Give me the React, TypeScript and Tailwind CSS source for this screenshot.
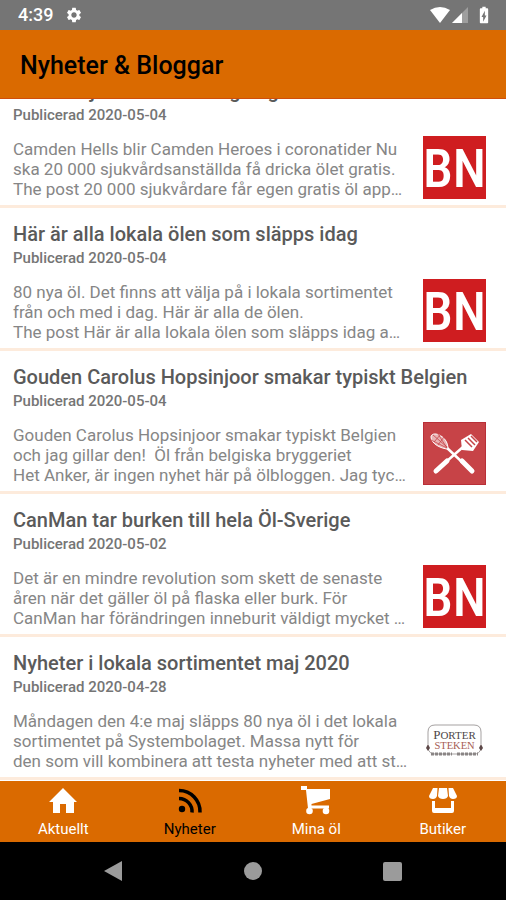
import React from 'react';
import clsx from 'clsx';
import { MdBatteryChargingFull, MdSettings } from 'react-icons/md';

type Logo = 'bn' | 'grill' | 'porter';

interface Post {
  title: string;
  date: string;
  lines: string[];
  logo: Logo;
}

const posts: Post[] = [
  {
    title: '20 000 sjukvårdare får egen gratis öl',
    date: '2020-05-04',
    lines: [
      'Camden Hells blir Camden Heroes i coronatider Nu',
      'ska 20 000 sjukvårdsanställda få dricka ölet gratis.',
      'The post 20 000 sjukvårdare får egen gratis öl app…',
    ],
    logo: 'bn',
  },
  {
    title: 'Här är alla lokala ölen som släpps idag',
    date: '2020-05-04',
    lines: [
      '80 nya öl. Det finns att välja på i lokala sortimentet',
      'från och med i dag. Här är alla de ölen.',
      'The post Här är alla lokala ölen som släpps idag a…',
    ],
    logo: 'bn',
  },
  {
    title: 'Gouden Carolus Hopsinjoor smakar typiskt Belgien',
    date: '2020-05-04',
    lines: [
      'Gouden Carolus Hopsinjoor smakar typiskt Belgien',
      'och jag gillar den!  Öl från belgiska bryggeriet',
      'Het Anker, är ingen nyhet här på ölbloggen. Jag tyc…',
    ],
    logo: 'grill',
  },
  {
    title: 'CanMan tar burken till hela Öl-Sverige',
    date: '2020-05-02',
    lines: [
      'Det är en mindre revolution som skett de senaste',
      'åren när det gäller öl på flaska eller burk. För',
      'CanMan har förändringen inneburit väldigt mycket …',
    ],
    logo: 'bn',
  },
  {
    title: 'Nyheter i lokala sortimentet maj 2020',
    date: '2020-04-28',
    lines: [
      'Måndagen den 4:e maj släpps 80 nya öl i det lokala',
      'sortimentet på Systembolaget. Massa nytt för',
      'den som vill kombinera att testa nyheter med att st…',
    ],
    logo: 'porter',
  },
];

function BnLogo() {
  return (
    <svg viewBox="0 0 63 63" className="size-[63px]" role="img" aria-label="BN">
      <rect width="63" height="63" fill="#cf1d20" />
      <text
        x="31.500"
        y="51"
        textAnchor="middle"
        fill="#fff"
        fontFamily="'Roboto Condensed', Roboto, sans-serif"
        fontWeight="500"
        fontSize="54"
      >
        BN
      </text>
    </svg>
  );
}

function GrillLogo() {
  return (
    <svg viewBox="0 0 63 63" className="size-[63px]" aria-hidden="true">
      <rect width="63" height="63" fill="#b92f38" />
      <rect x="1" y="1" width="61" height="61" fill="#c74347" />
      <g stroke="#fff" strokeLinecap="round" fill="none">
        <path d="M23 25 39 40M40 25 24 39" strokeWidth="2.5" />
        <path d="M39 39 49 49M24 39 13 49" strokeWidth="5" />
      </g>
      <path d="M8 15c0-3 4-4 8-2 5 2 9 7 9 14-6 0-17-5-17-12Z" fill="#e9b3b4" stroke="#fff" />
      <path d="m10 13 14 12M8 18l16 8M15 12l9 14M11 20l7-8M15 23l6-8" stroke="#c74347" strokeWidth=".8" />
      <path d="M38 18 48 12 56 20 50 29 39 28Z" fill="#fff" />
      <path d="m42 18 7 7M45 16l7 7M48 14l6 6" stroke="#c74347" strokeWidth="1.5" />
    </svg>
  );
}

function PorterLogo() {
  return (
    <svg viewBox="0 0 63 63" className="size-[63px]" role="img" aria-label="Porter Steken">
      <path
        d="M5 36V24q0-7 7-7h39q7 0 7 7v12M5 40q1 6 7 6h39q6 0 7-6"
        fill="none"
        stroke="#a5a1a1"
        strokeWidth="1"
      />
      <path d="M8 46h21M34 46h21" stroke="#8a8585" strokeWidth="3" strokeDasharray="3 1" />
      <path d="m3 40 2-4 2 4-2 3ZM56 40l2-4 2 4-2 3Z" fill="#5d4848" />
      <g fontFamily="'Liberation Serif', serif" textAnchor="middle">
        <text x="31.500" y="31" fill="#4d4747" fontSize="13">P<tspan fontSize="11">ORTER</tspan></text>
        <text x="31.500" y="41" fill="#a65c53" fontSize="10.500">STEKEN</text>
      </g>
    </svg>
  );
}

const logos: Record<Logo, React.ReactNode> = {
  bn: <BnLogo />,
  grill: <GrillLogo />,
  porter: <PorterLogo />,
};

const tabs = [
  {
    label: 'Aktuellt',
    icon: <path fill="currentColor" d="M14 1 28 15h-3v11h-8v-9h-6v9H4V15H0Z" />,
  },
  {
    label: 'Nyheter',
    active: true,
    icon: (
      <g fill="none" stroke="currentColor" strokeWidth="3.5">
        <circle cx="6" cy="22" r="3.2" fill="currentColor" stroke="none" />
        <path d="M3 11.500a13 13 0 0 1 13 14M3 3.500a21 21 0 0 1 21 22" />
      </g>
    ),
  },
  {
    label: 'Mina öl',
    icon: (
      <g fill="currentColor">
        <path d="M-1-1h6v3h23v10L9.500 17v1.500H27v3H6L4 3h-5Z" />
        <circle cx="7.500" cy="24" r="3.300" />
        <circle cx="24" cy="24" r="3.300" />
      </g>
    ),
  },
  {
    label: 'Butiker',
    icon: (
      <g fill="currentColor">
        <path d="M4 1h4.500L8 9q-1 3-4 3-4 0-4-3ZM10 1h8l1 8q-1 3-5 3t-5-3ZM19.500 1H24l4 8q0 3-4 3-3 0-4-3Z" />
        <path d="M3 14h3v7h16v-7h3v10q0 2-2 2H5q-2 0-2-2Z" />
      </g>
    ),
  },
];

function PostRow({ post }: { post: Post }) {
  return (
    <li className="border-b-3 border-[#fdebdc] pt-3 pr-5 pb-1.5 pl-[13px]">
      <h2 className="text-xl leading-7 font-medium whitespace-nowrap text-[#5a5a5a]">{post.title}</h2>
      <p className="text-[15px] leading-5 font-medium text-[#757575]">Publicerad {post.date}</p>
      <div className="flex items-start justify-between pt-[11px]">
        <p className="pt-[3px] text-[17px] leading-5 text-[#868686]">
          {post.lines.map((line) => (
            <span key={line} className="block whitespace-pre">
              {line}
            </span>
          ))}
        </p>
        <div className="shrink-0">{logos[post.logo]}</div>
      </div>
    </li>
  );
}

export default function App() {
  return (
    <div className="flex h-screen flex-col bg-white font-[Roboto,sans-serif]">
      <div className="flex h-[30px] shrink-0 items-center justify-between bg-[#757575] pr-3 pl-[18px] text-white">
        <div className="flex items-center gap-3">
          <span className="text-lg font-medium">4:39</span>
          <MdSettings className="size-[18px]" />
        </div>
        <div className="flex items-center">
          <svg viewBox="0 0 20 16" className="mr-0.5 h-4 w-5" fill="currentColor" aria-hidden="true">
            <path d="M0 3Q10-3 20 3L10 16Z" />
          </svg>
          <svg viewBox="0 0 16 16" className="mr-1.5 size-4" fill="currentColor" aria-hidden="true">
            <path d="M0 16 16 0v16Z" opacity=".3" />
            <path d="M0 16 10 6v10Z" />
          </svg>
          <MdBatteryChargingFull className="size-5" />
        </div>
      </div>

      <header className="flex h-[69px] shrink-0 items-center border-b border-[#d04e0c] bg-[#da6a00] px-5 pt-1">
        <h1 className="text-[25px] leading-8 font-medium text-black">Nyheter &amp; Bloggar</h1>
      </header>

      <main className="flex min-h-0 flex-1 flex-col justify-end overflow-hidden pb-px">
        <ul>
          {posts.map((post) => (
            <PostRow key={post.title} post={post} />
          ))}
        </ul>
      </main>

      <nav className="grid h-[61px] shrink-0 grid-cols-4 bg-[#da6a00]">
        {tabs.map((tab) => (
          <button
            key={tab.label}
            type="button"
            className={clsx(
              'flex flex-col items-center gap-1 pt-1.5 text-[15px] leading-5',
              tab.active ? 'text-black' : 'text-white',
            )}
          >
            <svg viewBox="0 0 28 28" className="size-7 overflow-visible" aria-hidden="true">
              {tab.icon}
            </svg>
            {tab.label}
          </button>
        ))}
      </nav>

      <div className="flex h-[58px] shrink-0 items-center justify-around bg-black px-11 text-[#9b9b9b]">
        <button type="button" aria-label="Tillbaka">
          <svg viewBox="0 0 20 20" className="size-5" fill="currentColor">
            <path d="M0 10 18 0v20Z" />
          </svg>
        </button>
        <button type="button" aria-label="Hem" className="size-[18px] rounded-full bg-current" />
        <button type="button" aria-label="Översikt" className="size-[19px] rounded-xs bg-current" />
      </div>
    </div>
  );
}
